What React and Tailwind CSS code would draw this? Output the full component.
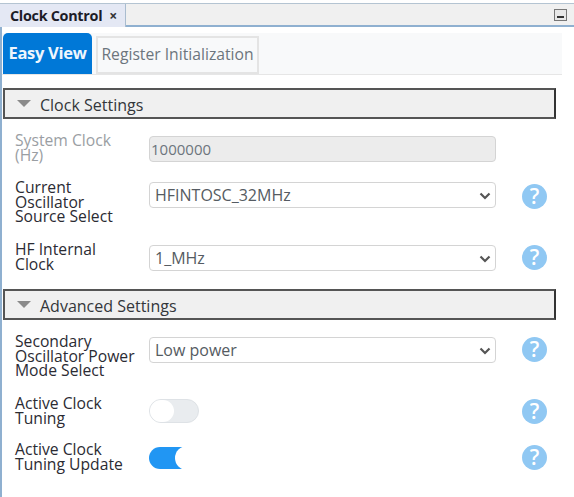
import React from "react";

const labelClass = "w-[134px] shrink-0 text-[15.7px] leading-[14.5px] text-[#2b2b33] whitespace-nowrap";

const HelpIcon = ({ className = "" }) => (
  <div className={"ml-[26px] w-[25px] h-[25px] shrink-0 rounded-full bg-[#90c8f3] flex items-center justify-center text-white font-semibold text-[21px] leading-none " + className}>
    ?
  </div>
);

const Chevron = () => (
  <svg className="absolute right-[4px] top-[8px]" width="12" height="10" viewBox="0 0 12 10" fill="none">
    <path d="M1.5 2.5 L6 7 L10.5 2.5" stroke="#555" strokeWidth="2.2" />
  </svg>
);

const SelectBox = ({ value }) => (
  <div className="relative w-[347px] h-[26px] shrink-0 bg-white border border-[#d4d4d4] rounded-[4px] pl-[5px] text-[16px] leading-[25px] text-[#555b62]">
    {value}
    <Chevron />
  </div>
);

const SectionHeader = ({ title }) => (
  <div className="ml-[3px] w-[553px] h-[31px] bg-[#f0f0f0] border-2 border-[#555] border-r-[#333] flex items-center pl-[12px] text-[16px] text-[#33363a]">
    <div className="w-0 h-0 border-l-[7px] border-r-[7px] border-t-[7px] border-l-transparent border-r-transparent border-t-[#8a8a8a] mr-[9px] mt-[-1px]"></div>
    <span className="mt-[3px]">{title}</span>
  </div>
);

const Toggle = ({ on }) =>
  on ? (
    <div className="relative mt-[2px] w-[50px] h-[22px]">
      <div className="w-[36px] h-[22px] rounded-l-full bg-[#2196f3]"></div>
      <div className="absolute right-0 top-[-1px] w-[24px] h-[24px] rounded-full bg-white"></div>
    </div>
  ) : (
    <div className="relative w-[50px] h-[24px] rounded-full bg-[#e9ecef] border border-[#dee2e6]">
      <div className="absolute left-0 top-0 w-[24px] h-[22px] rounded-full bg-white"></div>
    </div>
  );

const App = () => {
  return (
    <div className="relative w-[574px] h-[497px] bg-white overflow-hidden" style={{ fontFamily: '"Open Sans", "Noto Sans", sans-serif' }}>
      {/* top tab bar */}
      <div className="mt-[3px] h-[24px] bg-[#f0f0f0] border-t border-t-[#b4c4d2] border-b-2 border-b-[#8fb0d0] flex items-start justify-between">
        <div className="w-[126px] h-[23px] bg-[#e4e8f4] border-r border-r-[#a9bccf] flex items-center pl-[10px] text-[14.4px] font-bold tracking-[-0.3px] text-[#1c1c28] whitespace-nowrap">
          Clock Control
          <span className="ml-[7px] text-[14px] leading-none text-[#333]">×</span>
        </div>
        <div className="mr-[7px] mt-[5px] w-[13px] h-[12px] bg-[#e8e8e8] border border-[#777] flex items-end justify-center pb-[2px]">
          <div className="w-[7px] h-[2px] bg-[#333]"></div>
        </div>
      </div>

      {/* left edge line */}
      <div className="absolute left-0 top-[27px] bottom-0 w-[2px] bg-[#8fb0d0]"></div>

      {/* view tabs */}
      <div className="mt-[6px] w-[562px] h-[42px] bg-[#f8f9fa] border-b border-b-[#e6e6e6] flex items-end pl-[3px]">
        <div className="w-[89px] h-[41px] bg-[#0078d7] rounded-t-[5px] flex items-center justify-center text-[16.5px] font-bold tracking-[-0.3px] text-[#eef6fd] whitespace-nowrap">
          Easy View
        </div>
        <div className="ml-[4px] w-[163px] h-[38px] border-2 border-[#e4e4e4] flex items-center justify-center text-[15.7px] leading-[20px] pb-[2px] text-[#6c757d] whitespace-nowrap">
          Register Initialization
        </div>
      </div>

      <div className="h-[13px]"></div>
      <SectionHeader title="Clock Settings" />

      {/* clock settings rows */}
      <div className="pl-[15px] mt-[17px] flex items-start h-[26px]">
        <div className={labelClass + " mt-[-3px] text-[#9a9ea3]"}>System Clock<br />(Hz)</div>
        <div className="w-[347px] h-[26px] shrink-0 bg-[#ececec] border border-[#d4d4d4] rounded-[4px] pl-[1px] text-[15px] leading-[25px] text-[#6c757d]">
          1000000
        </div>
      </div>

      <div className="pl-[15px] mt-[20px] flex items-start h-[26px]">
        <div className={labelClass + " mt-[-2px]"}>Current<br />Oscillator<br />Source Select</div>
        <SelectBox value="HFINTOSC_32MHz" />
        <HelpIcon className="mt-[2px]" />
      </div>

      <div className="pl-[15px] mt-[37px] flex items-start h-[26px]">
        <div className={labelClass + " mt-[-3px]"}>HF Internal<br />Clock</div>
        <SelectBox value="1_MHz" />
        <HelpIcon />
      </div>

      <div className="h-[18px]"></div>
      <SectionHeader title="Advanced Settings" />

      {/* advanced settings rows */}
      <div className="pl-[15px] mt-[17px] flex items-start h-[26px]">
        <div className={labelClass + " mt-[-3px]"}>Secondary<br />Oscillator Power<br />Mode Select</div>
        <SelectBox value="Low power" />
        <HelpIcon />
      </div>

      <div className="pl-[15px] mt-[36px] flex items-start h-[24px]">
        <div className={labelClass + " mt-[-3px]"}>Active Clock<br />Tuning</div>
        <div className="w-[347px] shrink-0">
          <Toggle on={false} />
        </div>
        <HelpIcon />
      </div>

      <div className="pl-[15px] mt-[22px] flex items-start h-[24px]">
        <div className={labelClass + " mt-[-3px]"}>Active Clock<br />Tuning Update</div>
        <div className="w-[347px] shrink-0">
          <Toggle on={true} />
        </div>
        <HelpIcon />
      </div>
    </div>
  );
};

export default App;
